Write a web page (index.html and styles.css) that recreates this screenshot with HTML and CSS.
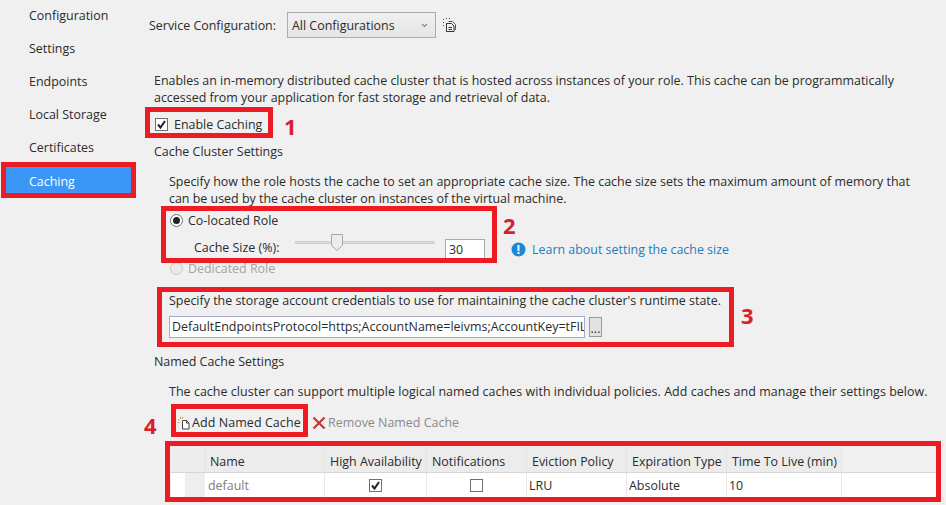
FILE: index.html
```html
<!DOCTYPE html>
<html lang="en">
<head>
<meta charset="utf-8">
<title>Caching</title>
<link rel="stylesheet" href="styles.css">
</head>
<body>
<div class="page">
  <nav class="side">
    <div class="nav-item">Configuration</div>
    <div class="nav-item">Settings</div>
    <div class="nav-item">Endpoints</div>
    <div class="nav-item">Local Storage</div>
    <div class="nav-item">Certificates</div>
    <div class="nav-item active">Caching</div>
  </nav>
  <main class="main">
    <div class="service-row">
      <span class="service-label">Service Configuration:</span>
      <div class="select"><span>All Configurations</span>
        <svg class="chev" width="7" height="5" viewBox="0 0 7 5"><path d="M1 1l2.500 2.500L6 1" fill="none" stroke="#888" stroke-width="1.200"/></svg>
      </div>
      <svg class="copy-icon" width="15" height="15" viewBox="0 0 15 15"><path d="M.5 1v1M.5 4v1M.5 7v1M3 .5h1M6 .5h1" stroke="#555" fill="none"/><path d="M5.500 3.500h4l3 3v5h-1" fill="none" stroke="#555"/><path d="M3.500 5.500h5l2.500 2.500v5.500h-7.500z" fill="#f4f4f4" stroke="#333"/><path d="M5.500 9.500h3.500M5.500 11.500h3.500" stroke="#333" fill="none"/></svg>
    </div>
    <p class="intro">Enables an in-memory distributed cache cluster that is hosted across instances of your role. This cache can be programmatically accessed from your application for fast storage and retrieval of data.</p>
    <div class="enable-row">
      <span class="check"><svg width="13" height="13" viewBox="0 0 13 13"><path d="M3 6.500l2.500 3L10 3" fill="none" stroke="#222" stroke-width="2"/></svg></span>
      <span>Enable Caching</span>
    </div>
    <div class="heading cluster">Cache Cluster Settings</div>
    <p class="indent para-cluster">Specify how the role hosts the cache to set an appropriate cache size. The cache size sets the maximum amount of memory that can be used by the cache cluster on instances of the virtual machine.</p>
    <div class="radio-row indent">
      <span class="radio on"></span><span>Co-located Role</span>
    </div>
    <div class="size-row">
      <span class="size-label">Cache Size (%):</span>
      <div class="slider">
        <svg class="thumb" width="12" height="17" viewBox="0 0 12 17"><path d="M.5.5h11v11l-5.500 5-5.500-5z" fill="#ececec" stroke="#a8a8a8"/></svg>
      </div>
      <div class="num">30</div>
      <svg class="info" width="15" height="15" viewBox="0 0 15 15"><circle cx="7.500" cy="7.500" r="7" fill="#1e87d8"/><rect x="6.500" y="3" width="2" height="6" fill="#fff"/><rect x="6.500" y="10" width="2" height="2" fill="#fff"/></svg>
      <span class="link">Learn about setting the cache size</span>
    </div>
    <div class="radio-row indent disabled">
      <span class="radio"></span><span>Dedicated Role</span>
    </div>
    <p class="indent storage">Specify the storage account credentials to use for maintaining the cache cluster's runtime state.</p>
    <div class="conn-row">
      <div class="conn">DefaultEndpointsProtocol=https;AccountName=leivms;AccountKey=tFIL</div>
      <div class="dots">...</div>
    </div>
    <div class="heading named">Named Cache Settings</div>
    <p class="indent para-named">The cache cluster can support multiple logical named caches with individual policies. Add caches and manage their settings below.</p>
    <div class="toolbar">
      <svg class="add-icon" width="14" height="14" viewBox="0 0 14 14"><path d="M5.500 4.500h4l2.500 2.500v6h-6.500z" fill="#fff" stroke="#444"/><path d="M9.500 4.500v2.500h2.500" fill="none" stroke="#444"/><path d="M3.500 1v2M1 3l1.500 1.500M.5 6.500h2M6 1L5 3" stroke="#d9a03a" fill="none"/></svg>
      <span class="add-label">Add Named Cache</span>
      <svg class="x-icon" width="14" height="14" viewBox="0 0 14 14"><path d="M1.500 1.500l11 11M12.500 1.500l-11 11" stroke="#c8382e" stroke-width="2.200" fill="none"/></svg>
      <span class="remove-label">Remove Named Cache</span>
    </div>
    <div class="grid">
      <div class="cell corner"></div>
      <div class="cell head">Name</div>
      <div class="cell head">High Availability</div>
      <div class="cell head">Notifications</div>
      <div class="cell head">Eviction Policy</div>
      <div class="cell head">Expiration Type</div>
      <div class="cell head">Time To Live (min)</div>
      <div class="cell head-fill"></div>
      <div class="cell rowhead"></div>
      <div class="cell val muted">default</div>
      <div class="cell val center"><span class="check small"><svg width="13" height="13" viewBox="0 0 13 13"><path d="M3 6.500l2.500 3L10 3" fill="none" stroke="#222" stroke-width="2"/></svg></span></div>
      <div class="cell val center"><span class="check small"></span></div>
      <div class="cell val">LRU</div>
      <div class="cell val">Absolute</div>
      <div class="cell val">10</div>
      <div class="cell val fill"></div>
    </div>
  </main>
  <div class="mark m-nav"></div>
  <div class="mark m1"></div><b class="num-mark n1">1</b>
  <div class="mark m2"></div><b class="num-mark n2">2</b>
  <div class="mark m3"></div><b class="num-mark n3">3</b>
  <div class="mark m4"></div><b class="num-mark n4">4</b>
  <div class="mark m5"></div>
</div>
</body>
</html>
```
FILE: styles.css
```css
* { box-sizing: border-box; }
html, body { margin: 0; padding: 0; height: 100%; overflow: hidden; }
body {
  background: #f0f0f0;
  color: #2b2b2b;
  font-family: "Open Sans", "Noto Sans", sans-serif;
  font-size: 12.45px;
  line-height: 17px;
}
p { margin: 0; }
.page { position: relative; display: flex; width: 946px; height: 505px; overflow: hidden; }

.side { width: 135px; flex: none; padding: 7px 0 0 6px; display: flex; flex-direction: column; }
.nav-item { height: 33px; flex: none; padding-left: 23px; line-height: 17px; }
.nav-item.active { width: 126px; height: 28px; margin-top: -6px; line-height: 32px; background: #3b96f5; color: #fff; }

.main { flex: 1; min-width: 0; padding: 12px 0 0 14px; }
.service-row { display: flex; align-items: center; height: 26px; }
.service-label { width: 138px; flex: none; }
.select {
  width: 149px; height: 26px; padding: 0 4px;
  display: flex; align-items: center; justify-content: space-between;
  border: 1px solid #acacac;
  background: linear-gradient(#f0f0f0, #e5e5e5);
}
.chev { margin-right: 3px; }
.copy-icon { margin-left: 7px; }

.intro { width: 762px; margin: 34px 0 0 5px; }
.enable-row { display: flex; align-items: center; height: 17px; margin: 10px 0 0 6px; }
.check {
  width: 13px; height: 13px; display: inline-flex; flex: none; margin-right: 6px;
  border: 1px solid #707070; background: #fff; align-items: center; justify-content: center;
}
.check svg { flex: none; }
.heading { margin-left: 5px; }
.cluster { margin-top: 10px; }
.indent { margin-left: 20px; }
.para-cluster { width: 760px; margin-top: 13px; }
.radio-row { display: flex; align-items: center; height: 17px; }
.para-cluster + .radio-row { margin-top: 5px; }
.radio {
  width: 13px; height: 13px; margin: 0 5px 0 1px; flex: none; border-radius: 50%;
  border: 1px solid #707070; background: #fff; position: relative;
}
.radio.on::after {
  content: ""; position: absolute; left: 2px; top: 2px; width: 7px; height: 7px;
  border-radius: 50%; background: #222;
}
.size-row { display: flex; align-items: center; height: 22px; margin: 9px 0 0 45px; }
.size-label { width: 101px; flex: none; margin-bottom: 4px; }
.slider { position: relative; width: 140px; height: 3px; margin-bottom: 14px; background: #dcdcdc; border: 1px solid #d0d0d0; border-width: 1px 0; }
.thumb { position: absolute; left: 36px; top: -8px; }
.num { width: 40px; height: 20px; margin-left: 10px; padding-left: 3px; background: #fff; border: 1px solid #a9a9a9; border-bottom-color: #666; line-height: 20px; }
.info { margin-left: 26px; }
.link { margin-left: 6px; color: #1e7bbd; }
.disabled { color: #a5a5a5; }
.disabled .radio { border-color: #c8c8c8; background: #eaeaea; }
.storage { margin-top: 15px; }
.conn-row { display: flex; align-items: center; height: 22px; margin: 7px 0 0 20px; }
.conn { width: 416px; height: 22px; padding-left: 2px; background: #fff; border: 1px solid #a9a9d0; line-height: 20px; overflow: hidden; white-space: nowrap; }
.dots { width: 13px; height: 20px; margin-left: 4px; background: #e2e2e2; border: 1px solid #999; text-align: center; line-height: 22px; }
.named { margin-top: 15px; }
.para-named { margin-top: 13px; white-space: nowrap; letter-spacing: .05px; }
.toolbar { display: flex; align-items: center; height: 17px; margin: 14px 0 0 28px; }
.add-icon { flex: none; margin-right: 1px; }
.add-label { width: 120px; flex: none; letter-spacing: .1px; }
.x-icon { flex: none; margin-right: 2px; }
.remove-label { color: #8a8a8a; }
.grid {
  display: grid; margin: 16px 0 0 22px; width: 766px;
  grid-template-columns: 34px 120px 102px 100px 100px 100px 115px 95px;
  grid-template-rows: 26px 24px;
}
.cell { padding-left: 5px; white-space: nowrap; display: flex; align-items: center; }
.head, .corner, .head-fill { border-right: 1px solid #e4e4e4; border-bottom: 1px solid #d5d5d5; background: #ececec; padding-top: 3px; }
.corner { background: #ededed; }
.head-fill { border-right: 0; background: #f0f0f0; }
.rowhead { background: linear-gradient(90deg, #fff 0 40%, #eee 40%); }
.val { background: #fff; border-right: 1px solid #e8e8e8; padding-left: 2px; }
.val.fill { border-right: 0; }
.muted { color: #808080; padding-left: 3px; }
.center { justify-content: center; padding-left: 0; }
.check.small { margin: 0; }

.mark { position: absolute; border: 5px solid #ed1c24; pointer-events: none; }
.m-nav { left: 1px; top: 162px; width: 135px; height: 36px; }
.m1 { left: 145px; top: 107px; width: 128px; height: 31px; }
.m2 { left: 161px; top: 206px; width: 336px; height: 57px; }
.m3 { left: 157px; top: 287px; width: 577px; height: 60px; }
.m4 { left: 171px; top: 404px; width: 137px; height: 33px; }
.m5 { left: 165px; top: 441px; width: 776px; height: 61px; }
.num-mark { position: absolute; color: #d8202a; font-size: 22px; line-height: 24px; font-family: "Open Sans", sans-serif; font-weight: 700; }
.n1 { left: 284px; top: 114px; }
.n2 { left: 503px; top: 213px; }
.n3 { left: 741px; top: 303px; }
.n4 { left: 144px; top: 413px; }
```
